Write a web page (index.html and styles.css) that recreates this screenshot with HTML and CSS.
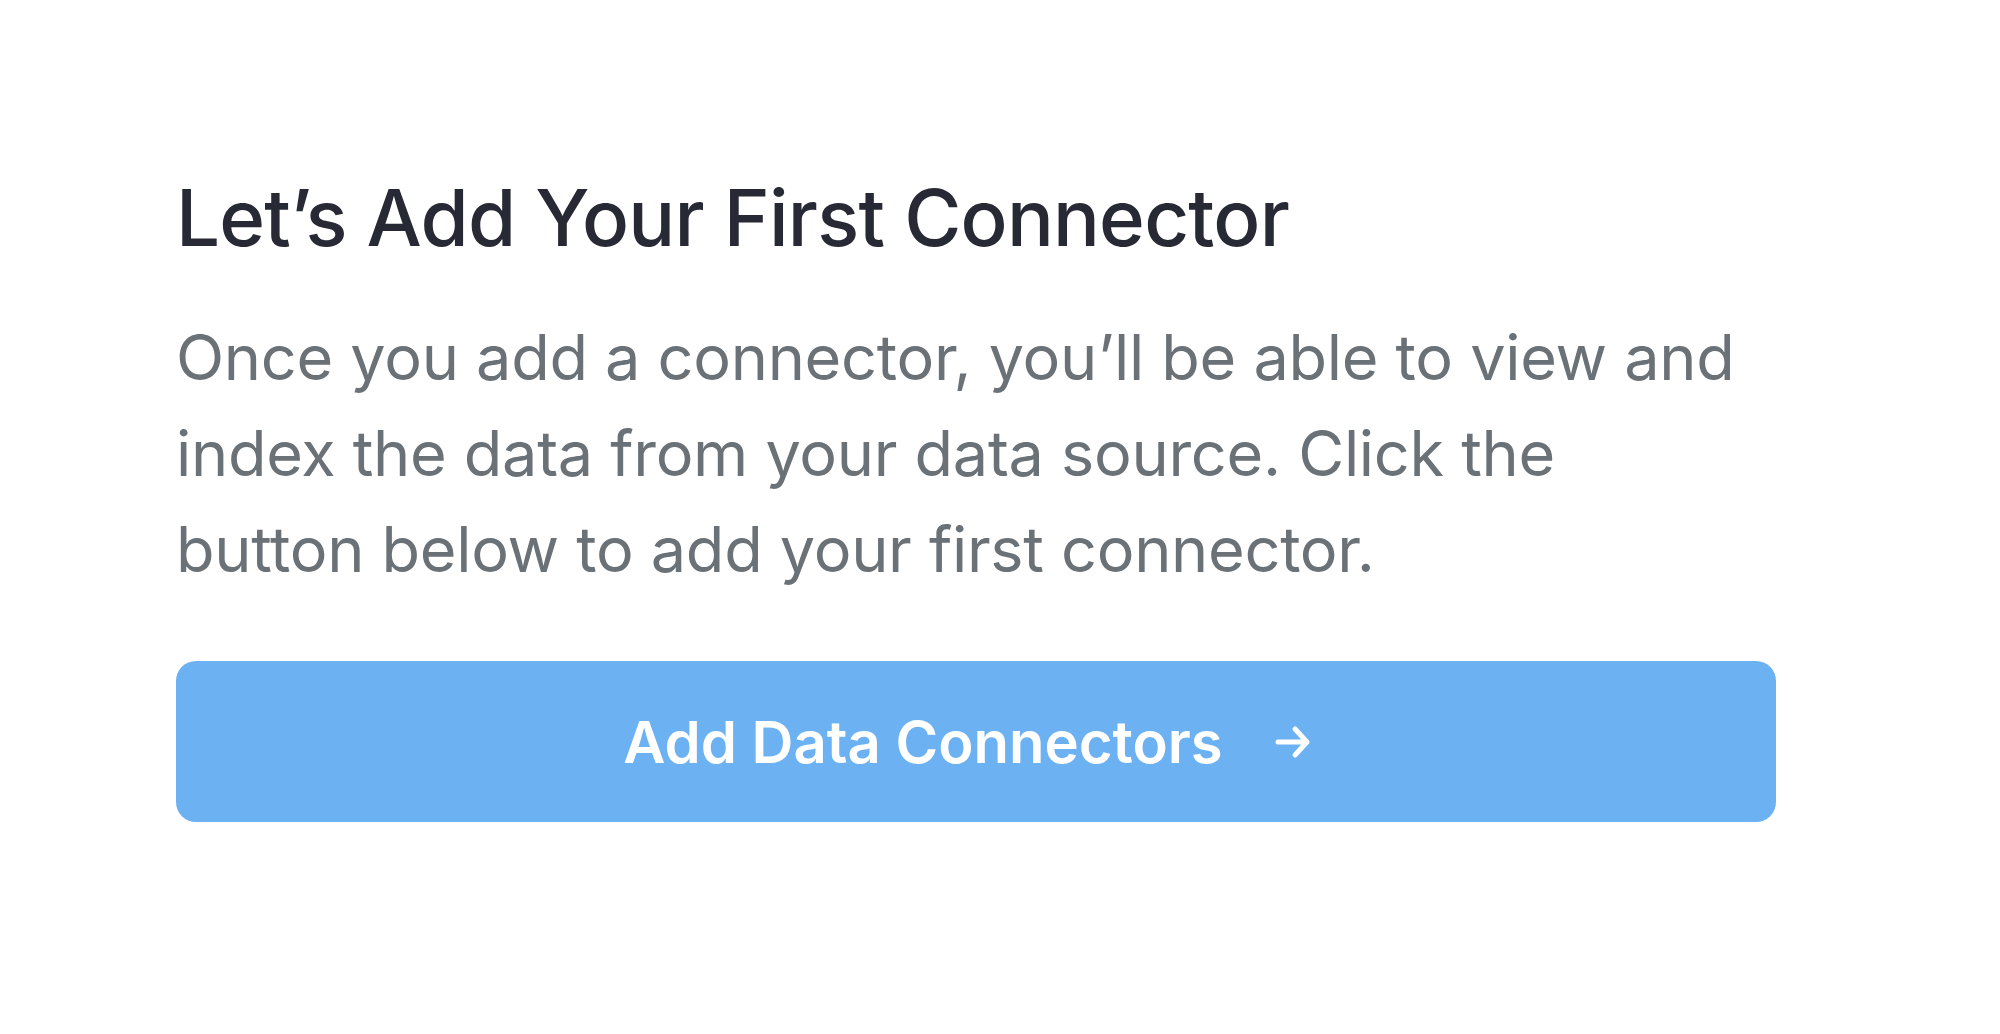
FILE: index.html
```html
<!DOCTYPE html>
<html lang="en">
<head>
<meta charset="utf-8">
<title>Add Your First Connector</title>
<link rel="stylesheet" href="styles.css">
</head>
<body>
<main class="page">
  <section class="empty">
    <h1 class="empty-title">Let’s Add Your First Connector</h1>
    <p class="empty-text">Once you add a connector, you’ll be able to view and index the data from your data source. Click the button below to add your first connector.</p>
    <button class="cta" type="button">
      <span class="cta-label">Add Data Connectors</span>
      <svg class="cta-icon" viewBox="0 0 36 36" width="36" height="36" aria-hidden="true">
        <path d="M3 18 H32 M20 5 L32 18 L20 31" fill="none" stroke="#ffffff" stroke-width="5" stroke-linecap="round" stroke-linejoin="round"/>
      </svg>
    </button>
  </section>
</main>
</body>
</html>
```

FILE: styles.css
```css
html, body {
  margin: 0;
  padding: 0;
  background: #ffffff;
}

body {
  font-family: Inter, "Noto Sans", "Liberation Sans", sans-serif;
}

.page {
  padding: 170px 0 0 176px;
}

.empty {
  width: 1600px;
  display: flex;
  flex-direction: column;
}

.empty-title {
  margin: 0;
  font-size: 78px;
  font-weight: 500;
  line-height: 96px;
  color: #272a34;
  letter-spacing: -0.8px;
}

.empty-text {
  margin: 43px 0 0;
  max-width: 1575px;
  font-size: 63px;
  font-weight: 400;
  line-height: 96px;
  color: #6a7177;
  letter-spacing: -0.3px;
}

.cta {
  margin-top: 64px;
  height: 161px;
  width: 1600px;
  padding: 0 18px 0 0;
  border: none;
  border-radius: 20px;
  background: #6cb2f2;
  color: #ffffff;
  display: flex;
  align-items: center;
  justify-content: center;
  gap: 52px;
  font-family: inherit;
  font-size: 58px;
  font-weight: 600;
  cursor: pointer;
}

.cta-icon {
  display: block;
}
```
